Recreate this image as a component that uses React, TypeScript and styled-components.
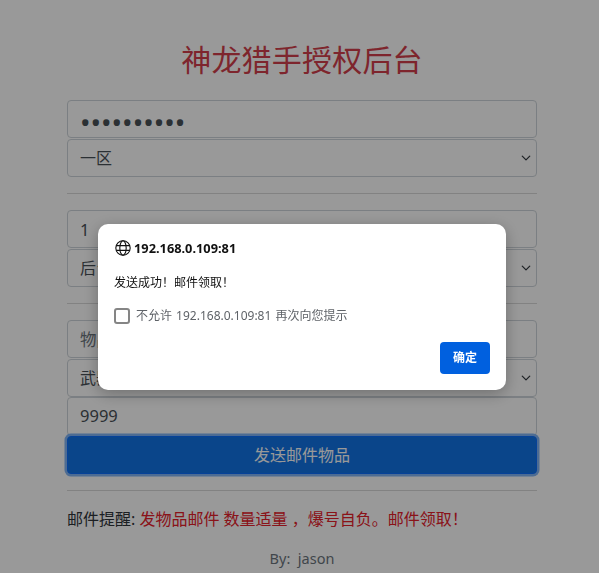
import React from "react";
import styled, { createGlobalStyle } from "styled-components";

const uiFont = `"Noto Sans", "Noto Sans CJK SC", "Liberation Sans", sans-serif`;
const chevron = `url("data:image/svg+xml,%3csvg xmlns='http://www.w3.org/2000/svg' viewBox='0 0 16 16'%3e%3cpath fill='none' stroke='%23343a40' stroke-linecap='round' stroke-linejoin='round' stroke-width='2' d='m2 5 6 6 6-6'/%3e%3c/svg%3e")`;

const GlobalStyle = createGlobalStyle`
  html, body {
    margin: 0;
    height: 100%;
    overflow: hidden;
    background: #fff;
  }
  body {
    font-family: ${uiFont};
    font-size: 16px;
    line-height: 1.5;
    color: #212529;
  }
`;

const Page = styled.main`
  width: 470px;
  margin-left: 67px;
  padding-top: 42px;
`;

const Title = styled.h1`
  margin: 0 0 22px;
  font-size: 30px;
  font-weight: 400;
  letter-spacing: 0.2px;
  line-height: 36px;
  text-align: center;
  color: #d23f4b;
`;

const Stack = styled.div`
  display: flex;
  flex-direction: column;
  gap: 1px;
`;

const SubmitGroup = styled.div`
  display: flex;
  flex-direction: column;
  margin-top: -1px;
`;

const Field = styled.input`
  box-sizing: border-box;
  display: block;
  width: 100%;
  height: 38px;
  padding: 6px 12px;
  border: 1px solid #ced4da;
  border-radius: 4px;
  background: #fff;
  color: #495057;
  font: 400 16.5px/24px ${uiFont};

  &::placeholder {
    color: #6c757d;
  }
`;

const PasswordField = styled(Field)`
  padding: 6px 12px 0 12px;
  color: #495057;
  font-size: 28px;
`;

const QuantityField = styled(Field)`
  height: 39px;
  padding-bottom: 8px;
`;

const Select = styled.select`
  box-sizing: border-box;
  display: block;
  width: 100%;
  height: 38px;
  padding: 6px 36px 6px 12px;
  border: 1px solid #ced4da;
  border-radius: 4px;
  appearance: none;
  background: #fff ${chevron} no-repeat right 5px center / 10px 10px;
  color: #495057;
  font: 400 16px/24px ${uiFont};
`;

const Rule = styled.hr`
  margin: 16px 0;
  height: 1px;
  border: 0;
  background: #d9d9d9;
`;

const SendButton = styled.button`
  display: block;
  position: relative;
  box-sizing: border-box;
  width: 100%;
  height: 38px;
  border: 1px solid #0d6efd;
  border-radius: 4px;
  background: #1274e6;
  box-shadow: 0 0 0 2.5px #80b4f5;
  color: #fff;
  font: 400 16px/24px ${uiFont};
`;

const Notice = styled.p`
  margin: 0 0 15px;
  color: #2f343a;
  line-height: 24px;
`;

const NoticeRed = styled.span`
  color: #e6202a;
`;

const Footer = styled.p`
  margin: 0;
  text-align: center;
  color: #6c757d;
  font-size: 14.5px;
  line-height: 24px;
`;

const Backdrop = styled.div`
  position: fixed;
  inset: 0;
  background: rgba(0, 0, 0, 0.4);
`;

const Dialog = styled.div`
  position: absolute;
  left: 98px;
  top: 224px;
  box-sizing: border-box;
  width: 408px;
  height: 166px;
  padding: 16px;
  border-radius: 10px;
  background: #fff;
  box-shadow: 0 4px 16px rgba(0, 0, 0, 0.28);
  display: flex;
  flex-direction: column;
`;

const DialogHeader = styled.div`
  display: flex;
  align-items: center;
  gap: 3px;
  height: 16px;
  padding-left: 1px;
  color: #111;
  font-size: 12.8px;
  font-weight: 700;
  line-height: 16px;
`;

const Message = styled.p`
  margin: 19px 0 0;
  color: #111;
  font-size: 12px;
  line-height: 16px;
`;

const CheckRow = styled.label`
  display: flex;
  align-items: center;
  gap: 6px;
  margin-top: 17px;
  height: 15px;
  color: #5f6368;
  font-size: 12px;
  word-spacing: 1px;
  line-height: 15px;
`;

const Check = styled.input`
  box-sizing: border-box;
  appearance: none;
  width: 16px;
  height: 16px;
  margin: 0;
  border: 2px solid #858585;
  border-radius: 3px;
  background: #fff;
`;

const DialogActions = styled.div`
  display: flex;
  justify-content: flex-end;
  margin-top: 19px;
`;

const ConfirmButton = styled.button`
  width: 50px;
  height: 32px;
  padding: 0;
  border: 0;
  border-radius: 4px;
  background: #0060df;
  color: #fff;
  font: 700 12px/16px ${uiFont};
`;

function GlobeIcon() {
  return (
    <svg width="16" height="16" viewBox="0 0 16 16" fill="none" stroke="#111" strokeWidth="1.1">
      <circle cx="8" cy="8" r="7.2" />
      <ellipse cx="8" cy="8" rx="3.2" ry="7.2" />
      <path d="M1.3 5.6h13.4M1.3 10.4h13.4" />
    </svg>
  );
}

export default function App(): JSX.Element {
  return (
    <>
      <GlobalStyle />
      <Page>
        <Title>神龙猎手授权后台</Title>
        <Stack>
          <PasswordField type="password" defaultValue="1234567890" readOnly />
          <Select defaultValue="一区">
            <option>一区</option>
          </Select>
        </Stack>
        <Rule />
        <Stack>
          <Field type="text" defaultValue="1" readOnly />
          <Select defaultValue="后台">
            <option>后台</option>
          </Select>
        </Stack>
        <Rule />
        <Stack>
          <Field type="text" placeholder="物品" readOnly />
          <Select defaultValue="武器">
            <option>武器</option>
          </Select>
          <SubmitGroup>
            <QuantityField type="text" defaultValue="9999" readOnly />
            <SendButton type="button">发送邮件物品</SendButton>
          </SubmitGroup>
        </Stack>
        <Rule />
        <Notice>
          邮件提醒: <NoticeRed>发物品邮件 数量适量 ，爆号自负。邮件领取！</NoticeRed>
        </Notice>
        <Footer>By:&nbsp;&nbsp;jason</Footer>
      </Page>
      <Backdrop>
        <Dialog role="alertdialog">
          <DialogHeader>
            <GlobeIcon />
            192.168.0.109:81
          </DialogHeader>
          <Message>发送成功！邮件领取！</Message>
          <CheckRow>
            <Check type="checkbox" />
            不允许 192.168.0.109:81 再次向您提示
          </CheckRow>
          <DialogActions>
            <ConfirmButton type="button">确定</ConfirmButton>
          </DialogActions>
        </Dialog>
      </Backdrop>
    </>
  );
}
